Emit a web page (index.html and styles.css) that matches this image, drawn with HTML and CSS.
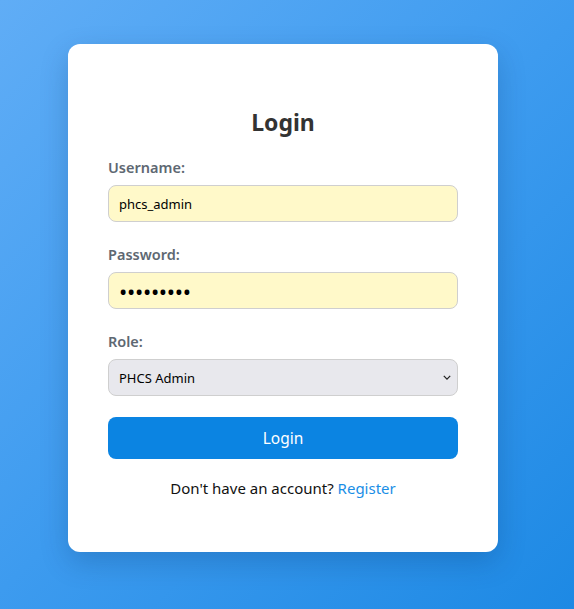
FILE: index.html
```html
<!DOCTYPE html>
<html lang="en">
<head>
<meta charset="utf-8">
<title>Login</title>
<link rel="stylesheet" href="styles.css">
</head>
<body>
<main class="page">
  <form class="card">
    <h2 class="title">Login</h2>
    <label class="label" for="username">Username:</label>
    <input class="field filled" id="username" type="text" value="phcs_admin">
    <label class="label" for="password">Password:</label>
    <input class="field filled pw" id="password" type="password" value="123456789">
    <label class="label" for="role">Role:</label>
    <div class="select-wrap">
      <select class="field select" id="role">
        <option>PHCS Admin</option>
      </select>
      <svg class="chev" width="10" height="6" viewBox="0 0 10 6"><path d="M1 1 L5 5 L9 1" fill="none" stroke="#222" stroke-width="1.6"/></svg>
    </div>
    <button class="btn" type="button">Login</button>
    <p class="foot">Don't have an account? <a class="link" href="#">Register</a></p>
  </form>
</main>
</body>
</html>
```
FILE: styles.css
```css
html, body {
  margin: 0;
  height: 100%;
}
body {
  background: linear-gradient(135deg, #60adf6 0%, #3d9bef 50%, #1d89e4 100%);
  font-family: "Noto Sans", "Open Sans", sans-serif;
}
.page {
  display: flex;
  justify-content: flex-start;
  padding: 44px 0 0 68px;
  box-sizing: border-box;
  height: 100%;
}
.card {
  width: 430px;
  height: 508px;
  box-sizing: border-box;
  background: #fff;
  border-radius: 12px;
  box-shadow: 0 10px 28px rgba(0, 40, 90, 0.22);
  padding: 62px 40px 40px;
  display: flex;
  flex-direction: column;
}
.title {
  margin: 0 0 19px;
  text-align: center;
  font-size: 23px;
  line-height: 32px;
  font-weight: 700;
  color: #333;
}
.label {
  font-size: 14.5px;
  line-height: 20px;
  font-weight: 600;
  color: #5e6872;
  margin-bottom: 8px;
}
.field {
  box-sizing: border-box;
  width: 100%;
  height: 37px;
  border: 1px solid #cfcfcf;
  border-radius: 8px;
  padding: 0 10px;
  font-family: "Noto Sans", "Open Sans", sans-serif;
  font-size: 13px;
  color: #000;
  margin: 0 0 22px;
  outline: none;
}
.filled {
  background: #fff9c9;
}
.pw {
  font-size: 22px;
  letter-spacing: -0.3px;
}
.select-wrap {
  position: relative;
  margin-bottom: 21px;
}
.select {
  appearance: none;
  -webkit-appearance: none;
  background: #e8e8ed;
  margin: 0;
  font-size: 13px;
}
.chev {
  position: absolute;
  right: 7px;
  top: 16px;
  width: 8px;
  height: 5px;
}
.btn {
  height: 42px;
  border: none;
  border-radius: 8px;
  background: #0b84e2;
  color: #fff;
  font-family: "Noto Sans", "Open Sans", sans-serif;
  font-size: 15.5px;
  margin: 0;
}
.foot {
  margin: 19px 0 0;
  text-align: center;
  font-size: 15px;
  line-height: 20px;
  color: #111;
}
.link {
  color: #1a8ee6;
  text-decoration: none;
}
```
